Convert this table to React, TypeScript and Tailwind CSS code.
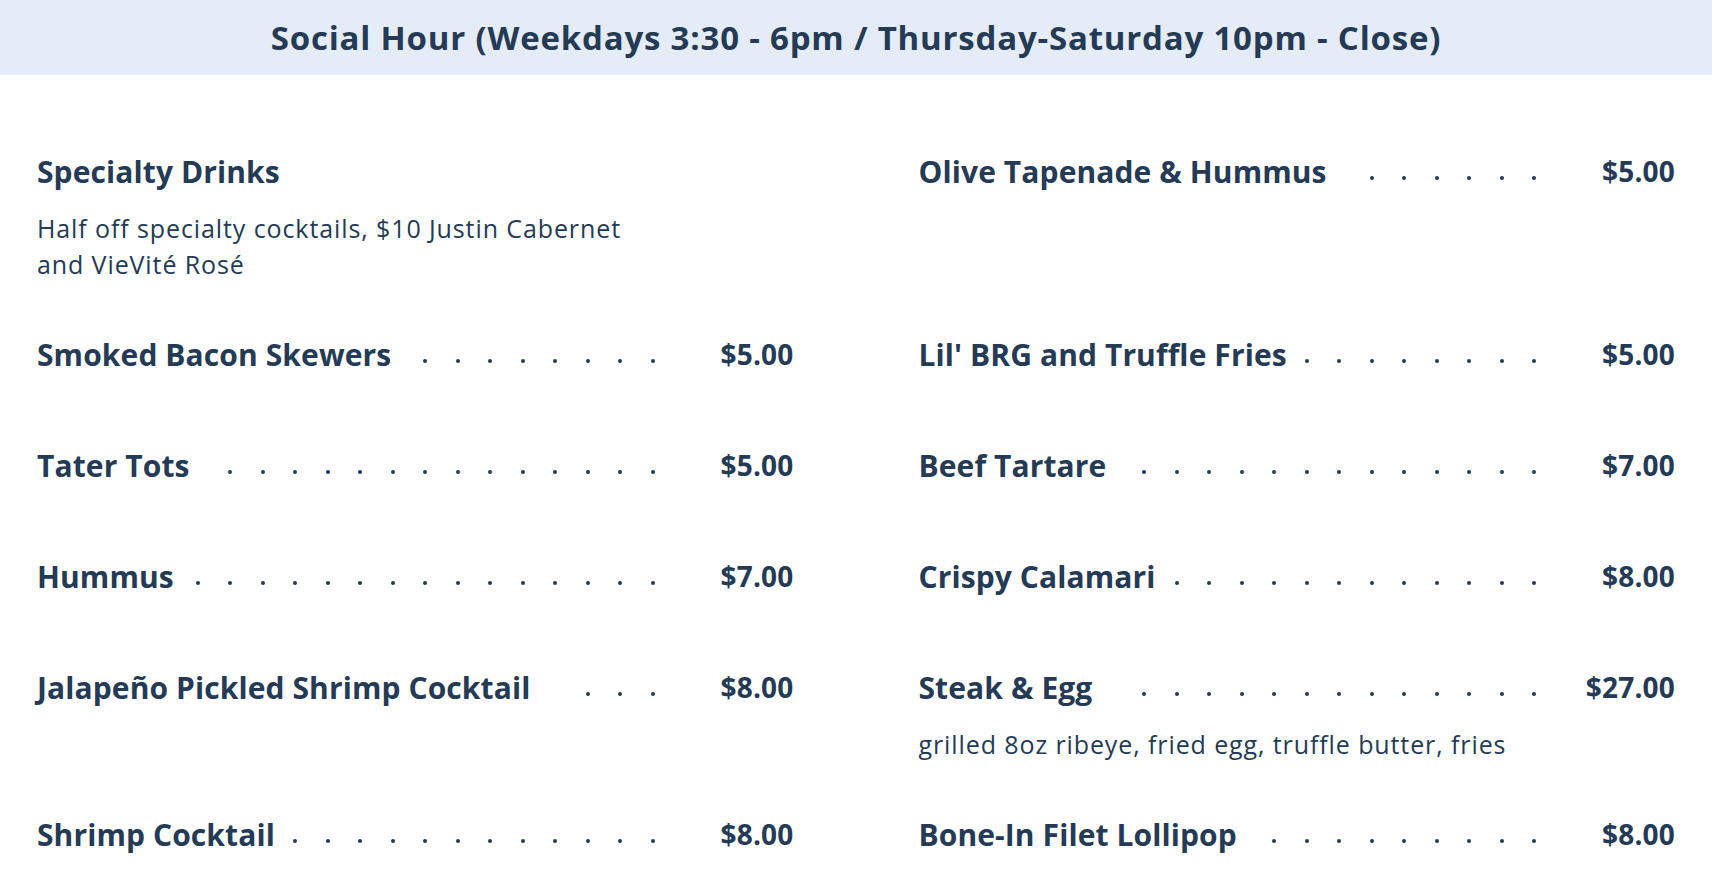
import React from "react";

type Item = { name: string; price?: string; desc?: string; dots?: number };

const rows: [Item, Item][] = [
  [
    { name: "Specialty Drinks", desc: "Half off specialty cocktails, $10 Justin Cabernet and VieVité Rosé" },
    { name: "Olive Tapenade & Hummus", price: "$5.00", dots: 6 },
  ],
  [
    { name: "Smoked Bacon Skewers", price: "$5.00", dots: 8 },
    { name: "Lil' BRG and Truffle Fries", price: "$5.00", dots: 8 },
  ],
  [
    { name: "Tater Tots", price: "$5.00", dots: 14 },
    { name: "Beef Tartare", price: "$7.00", dots: 13 },
  ],
  [
    { name: "Hummus", price: "$7.00", dots: 15 },
    { name: "Crispy Calamari", price: "$8.00", dots: 12 },
  ],
  [
    { name: "Jalapeño Pickled Shrimp Cocktail", price: "$8.00", dots: 3 },
    { name: "Steak & Egg", price: "$27.00", dots: 13, desc: "grilled 8oz ribeye, fried egg, truffle butter, fries" },
  ],
  [
    { name: "Shrimp Cocktail", price: "$8.00", dots: 12 },
    { name: "Bone-In Filet Lollipop", price: "$8.00", dots: 10 },
  ],
];

function MenuItem({ item }: { item: Item }) {
  const dots = Array.from({ length: item.dots ?? 0 });
  return (
    <div className="pb-[52px]">
      <div className="flex h-[40px] items-center mb-[19px] text-[30px] font-bold tracking-[0.1px]">
        <span className="whitespace-nowrap">{item.name}</span>
        {item.price && (
          <>
            <div className="flex-1 ml-[8px] h-[40px] overflow-hidden flex justify-end items-center">
              {dots.map((_, i) => (
                <div key={i} className="w-[32.5px] h-[40px] flex items-center justify-end shrink-0">
                  <div className="w-[4px] h-[4px] rounded-full bg-[#243a55] mt-[14px]" />
                </div>
              ))}
            </div>
            <span className="w-[139px] shrink-0 text-right text-[28px] tracking-[0.2px]">{item.price}</span>
          </>
        )}
      </div>
      {item.desc && (
        <p className="text-[25px] leading-[36px] max-w-[617px] font-normal tracking-[0.9px]">{item.desc}</p>
      )}
    </div>
  );
}

export default function App() {
  return (
    <div className="w-[1712px] min-h-[884px] bg-white text-[#243a55] font-['Open_Sans',sans-serif]">
      <div className="h-[75px] bg-[#e4edf7] flex items-center justify-center">
        <h1 className="text-[33px] font-bold tracking-[0.8px]">
          Social Hour (Weekdays 3:30 - 6pm / Thursday-Saturday 10pm - Close)
        </h1>
      </div>
      <div className="pt-[76px] px-[37px] grid grid-cols-2 gap-x-[125px]">
        {rows.map(([l, r], i) => (
          <React.Fragment key={i}>
            <MenuItem item={l} />
            <MenuItem item={r} />
          </React.Fragment>
        ))}
      </div>
    </div>
  );
}
